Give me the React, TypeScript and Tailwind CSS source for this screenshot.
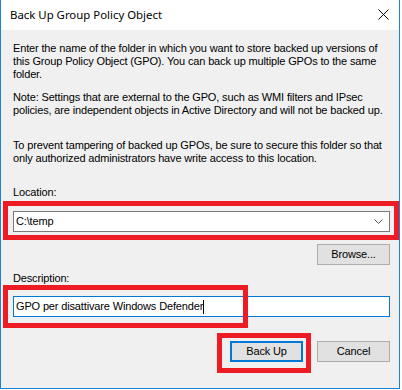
import React from "react";

const uiFont = { fontFamily: '"Liberation Sans", Arial, sans-serif' };

function Btn({ label, focused }: { label: string; focused?: boolean }) {
  return (
    <button
      className={
        "w-[73px] h-[21px] bg-[#e1e1e1] text-[11px] text-black leading-none flex items-center justify-center " +
        (focused ? "border-2 border-[#0078d7]" : "border border-[#adadad]")
      }
    >
      {label}
    </button>
  );
}

export default function App() {
  return (
    <div className="w-[402px] h-[390px] bg-white" style={uiFont}>
      <div className="relative w-[400px] h-[389px] flex flex-col border-x border-b border-[#1883d7] bg-[#f0f0f0]">
        {/* Title bar */}
        <div className="h-[30px] bg-white flex items-center justify-between pl-[9px] pr-[10px] shrink-0">
          <span className="text-[11.4px] text-black" style={{ fontFamily: '"Noto Sans", "Open Sans", sans-serif' }}>
            Back Up Group Policy Object
          </span>
          <svg width="11" height="11" viewBox="0 0 11 11" className="mt-[-1px]">
            <path d="M0.5 0.5 L10.5 10.5 M10.5 0.5 L0.5 10.5" stroke="#000" strokeWidth="1" fill="none" />
          </svg>
        </div>

        {/* Body */}
        <div className="flex flex-col pl-[12px] pr-[10px] pt-[12px] text-[11px] leading-[13px] text-black tracking-[-0.15px] whitespace-nowrap">
          <p>
            Enter the name of the folder in which you want to store backed up versions of
            <br />
            this Group Policy Object (GPO). You can back up multiple GPOs to the same
            <br />
            folder.
          </p>
          <p className="mt-[10px]">
            Note: Settings that are external to the GPO, such as WMI filters and IPsec
            <br />
            policies, are independent objects in Active Directory and will not be backed up.
          </p>
          <p className="mt-[22px]">
            To prevent tampering of backed up GPOs, be sure to secure this folder so that
            <br />
            only authorized administrators have write access to this location.
          </p>

          <label className="mt-[21px]">Location:</label>
          <div className="mt-[12px] w-[377px] h-[21px] bg-white border border-[#7a7a7a] flex items-center justify-between pl-[2px] pr-[6px]">
            <span>C:\temp</span>
            <svg width="9" height="5" viewBox="0 0 9 5">
              <path d="M0.5 0.5 L4.5 4.5 L8.5 0.5" stroke="#555" strokeWidth="1" fill="none" />
            </svg>
          </div>
          <div className="mt-[12px] flex justify-end w-[377px]">
            <Btn label="Browse..." />
          </div>

          <label className="mt-[7px]">Description:</label>
          <div className="mt-[11px] w-[377px] h-[21px] bg-white border border-[#0078d7] flex items-center pl-[2px]">
            <span>GPO per disattivare Windows Defender</span>
            <span className="w-px h-[14px] bg-black" />
          </div>

          <div className="mt-[24px] flex justify-end gap-[14px] w-[377px]">
            <Btn label="Back Up" focused />
            <Btn label="Cancel" />
          </div>
        </div>

        {/* Red annotation boxes */}
        <div className="absolute left-[2px] top-[201px] w-[396px] h-[39px] border-[5px] border-[#ed1c24] pointer-events-none" />
        <div className="absolute left-[2px] top-[285px] w-[245px] h-[43px] border-[5px] border-[#ed1c24] pointer-events-none" />
        <div className="absolute left-[216px] top-[333px] w-[94px] h-[40px] border-[5px] border-[#ed1c24] pointer-events-none" />
      </div>
    </div>
  );
}
